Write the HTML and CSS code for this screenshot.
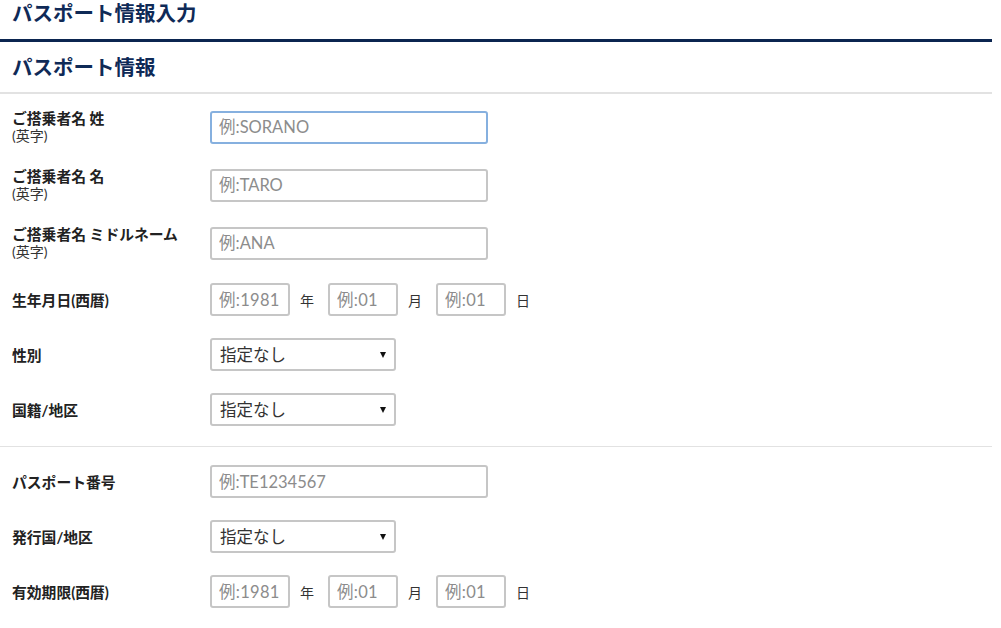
FILE: index.html
```html
<!DOCTYPE html>
<html lang="ja">
<head>
    <meta charset="UTF-8" />
    <title>パスポート情報入力</title>
    <link rel="stylesheet" href="styles.css">
</head>
<body>
    <div class="page">
        <h1 class="page-title">パスポート情報入力</h1>
        <h2 class="section-title">パスポート情報</h2>

        <div class="form-section">
            <div class="form-row">
                <label class="form-label" for="lastName">ご搭乗者名 姓<span class="sub">(英字)</span></label>
                <input type="text" id="lastName" class="text-input focused" placeholder="例:SORANO" />
            </div>
            <div class="form-row">
                <label class="form-label" for="firstName">ご搭乗者名 名<span class="sub">(英字)</span></label>
                <input type="text" id="firstName" class="text-input" placeholder="例:TARO" />
            </div>
            <div class="form-row">
                <label class="form-label" for="middleName">ご搭乗者名 ミドルネーム<span class="sub">(英字)</span></label>
                <input type="text" id="middleName" class="text-input" placeholder="例:ANA" />
            </div>
            <div class="form-row">
                <label class="form-label" for="birthYear">生年月日(西暦)</label>
                <div class="date-group">
                    <input type="text" id="birthYear" class="date-input year" placeholder="例:1981" />
                    <span class="unit">年</span>
                    <input type="text" class="date-input" placeholder="例:01" />
                    <span class="unit">月</span>
                    <input type="text" class="date-input" placeholder="例:01" />
                    <span class="unit">日</span>
                </div>
            </div>
            <div class="form-row">
                <label class="form-label" for="gender">性別</label>
                <div class="select-wrap">
                    <select id="gender">
                        <option>指定なし</option>
                        <option>男性</option>
                        <option>女性</option>
                    </select>
                </div>
            </div>
            <div class="form-row">
                <label class="form-label" for="nationality">国籍/地区</label>
                <div class="select-wrap">
                    <select id="nationality">
                        <option>指定なし</option>
                    </select>
                </div>
            </div>
        </div>

        <div class="form-section">
            <div class="form-row">
                <label class="form-label" for="passportNo">パスポート番号</label>
                <input type="text" id="passportNo" class="text-input" placeholder="例:TE1234567" />
            </div>
            <div class="form-row">
                <label class="form-label" for="issuer">発行国/地区</label>
                <div class="select-wrap">
                    <select id="issuer">
                        <option>指定なし</option>
                    </select>
                </div>
            </div>
            <div class="form-row">
                <label class="form-label" for="expiryYear">有効期限(西暦)</label>
                <div class="date-group">
                    <input type="text" id="expiryYear" class="date-input year" placeholder="例:1981" />
                    <span class="unit">年</span>
                    <input type="text" class="date-input" placeholder="例:01" />
                    <span class="unit">月</span>
                    <input type="text" class="date-input" placeholder="例:01" />
                    <span class="unit">日</span>
                </div>
            </div>
        </div>
    </div>
</body>
</html>
```

FILE: styles.css
```css
body {
    margin: 0;
    background-color: #fff;
    color: #222;
    font-family: "Lato", "Noto Sans CJK JP", sans-serif;
}

.page {
    width: 992px;
}

.page-title {
    margin: 0;
    padding: 0 12px 13px;
    font-size: 20.5px;
    line-height: 26px;
    font-weight: bold;
    color: #0f2a57;
    border-bottom: 3px solid #0b2550;
}

.section-title {
    margin: 12px 0 0;
    padding: 0 12px 12px;
    font-size: 20.5px;
    line-height: 26px;
    font-weight: bold;
    color: #0f2a57;
    border-bottom: 2px solid #e2e2e2;
}

.form-section {
    display: flex;
    flex-direction: column;
    gap: 22px;
    padding: 15px 12px 20px;
}

.form-section + .form-section {
    border-top: 1px solid #e2e2e2;
    padding-top: 18px;
}

.form-row {
    display: flex;
    align-items: center;
}

.form-label {
    width: 198px;
    flex-shrink: 0;
    font-size: 14.8px;
    line-height: 18px;
    font-weight: bold;
    color: #222;
}

.form-label .sub {
    display: block;
    font-size: 14px;
    font-weight: normal;
    color: #333;
}

input,
select {
    font-family: "Lato", "Noto Sans CJK JP", sans-serif;
    font-size: 16.5px;
    color: #333;
    height: 33px;
    box-sizing: border-box;
    border: 2px solid #c6c6c6;
    border-radius: 3px;
    background-color: #fff;
    outline: none;
}

input::placeholder {
    color: #8c8c8c;
}

.text-input {
    width: 278px;
    padding: 0 7px;
}

.text-input.focused {
    border-color: #86b0df;
}

/* Date inputs with units */
.date-group {
    display: flex;
    align-items: center;
}

.date-input {
    width: 70px;
    padding: 0 7px;
    letter-spacing: 0.3px;
}

.date-input.year {
    width: 80px;
}

.unit {
    margin: 0 14px 0 10px;
    font-size: 14px;
    color: #333;
}

/* Select with custom arrow */
.select-wrap {
    position: relative;
    width: 186px;
}

.select-wrap select {
    width: 100%;
    padding: 0 8px;
    appearance: none;
    -webkit-appearance: none;
}

.select-wrap::after {
    content: "";
    position: absolute;
    right: 10px;
    top: 14px;
    border-left: 3.5px solid transparent;
    border-right: 3.5px solid transparent;
    border-top: 6px solid #111;
    pointer-events: none;
}
```
